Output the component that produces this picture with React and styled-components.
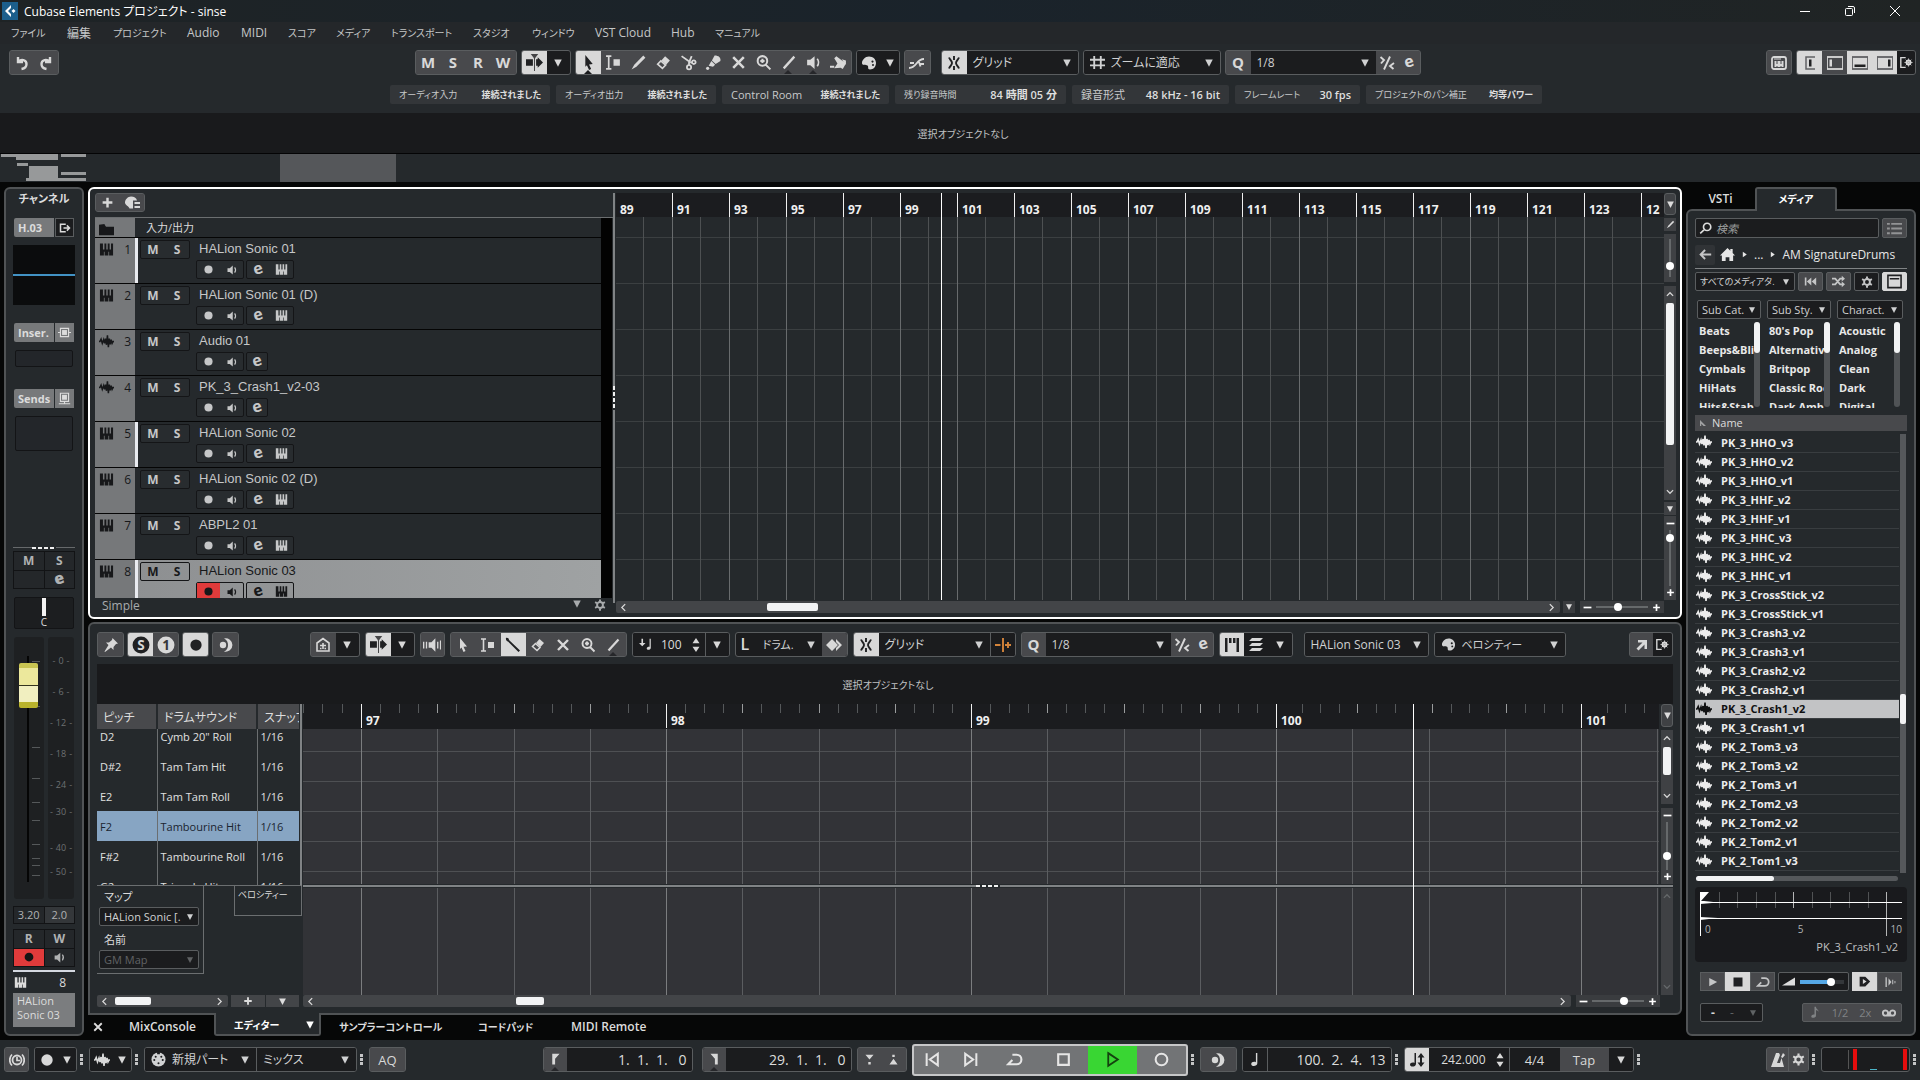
import React from 'react'
import styled, { createGlobalStyle, css } from 'styled-components'

const icons = {
  undo: <path d="M4 2v5h5M4.500 6.500C7 4 12.500 4.500 12.500 9c0 3-2 4.500-5 5" fill="none" stroke="currentColor" strokeWidth="2.400" />,
  redo: <path d="M12 2v5H7M11.500 6.500C9 4 3.500 4.500 3.500 9c0 3 2 4.500 5 5" fill="none" stroke="currentColor" strokeWidth="2.400" />,
  scroll: <><path d="M0 5h6.500v6H0zM9.500 5h1.500V3l5 5-5 5v-2H9.500z" /><path d="M4.500 0h7L8.500 4v12h-1V4z" opacity=".8" /></>,
  arrow: <path d="M5 1l7 8.500-3.500.300L10.500 14l-2 1-2-4.500L5 12z" />,
  range: <><path d="M1 2h5M1 14h5M3.500 2v12" fill="none" stroke="currentColor" strokeWidth="1.600" /><path d="M8 5h6v6H8z" /></>,
  pencil: <path d="M12.500 1.500l2 2L6 12l-4.500 2.500L4 10z" />,
  eraser: <><path d="M9.500 2L14 6 10.500 10 6 6z" /><path d="M5.500 6.500l4.500 4-3 3-4.500-4z" fill="none" stroke="currentColor" strokeWidth="1.500" /></>,
  scissors: <path d="M1.500 2l8.500 6M11 2L8.500 8v2.500M8.500 10.500a2 2 0 100 4 2 2 0 100-4M13 6a1.700 1.700 0 100 3.400A1.700 1.700 0 1013 6M10 8h2" fill="none" stroke="currentColor" strokeWidth="1.700" />,
  glue: <><path d="M9 1.500c4 0 6 2 5.500 5L10 9.500 6.500 6z" /><path d="M6 6.500l3.500 3.500-2 2-4-1z" /><circle cx="2.500" cy="13.500" r="1.500" /></>,
  cross: <path d="M3 3l10 10M13 3L3 13" fill="none" stroke="currentColor" strokeWidth="2.400" />,
  zoom: <path d="M7 2a4.500 4.500 0 100 9 4.500 4.500 0 100-9M7 4.500v4M5 6.500h4M10 10l4.500 4.500" fill="none" stroke="currentColor" strokeWidth="1.900" />,
  line: <path d="M13.500 2.500l-10 11" fill="none" stroke="currentColor" strokeWidth="2.200" />,
  drumstick: <path d="M1 1c1.500-.500 3 .500 3 2L15 13.500 13.500 15 3 4.500C1.500 4.500.500 2.500 1 1z" />,
  speaker: <><path d="M2 5.500h3L9 2v12L5 10.500H2z" /><path d="M11.500 4.500c1.500 2 1.500 5 0 7" fill="none" stroke="currentColor" strokeWidth="1.500" /></>,
  feedback: <path d="M5 5.500h2.500L11 2v12L7.500 10.500H5zM0 5h1.200v6H0zM2.500 5h1.200v6H2.500zM12.500 5h1.200v6h-1.200zM15 4h1v8h-1z" />,
  warp: <path d="M4 4l2-2 9 7-3 5-2-1-6 .500 3-4.500zM0 11h4v2H0zM11 5l4 1v4z" />,
  palette: <path fillRule="evenodd" d="M8 1.500c4 0 7 2.800 7 6.500s-2.500 6.500-6 6.500c-3 0-1-3-2.500-4S1 11 1 8s3-6.500 7-6.500zM11.500 5.500a1.100 1.100 0 100 2.200 1.100 1.100 0 100-2.200M12 9a1 1 0 100 2 1 1 0 100-2" />,
  crossfade: <path d="M0 13c8 0 7-9 15-9M1 8h4M11 9h4M9.500 5.500l2 6" fill="none" stroke="currentColor" strokeWidth="1.900" />,
  snap: <path d="M8 1v4M8 11v4M3 2.500C4 5 6 6 6 8s-2 3-3 5.500M13 2.500C12 5 10 6 10 8s2 3 3 5.500" fill="none" stroke="currentColor" strokeWidth="1.900" />,
  hash: <path d="M0 5h16M0 11h16M4.500 1v14M11.500 1v14" fill="none" stroke="currentColor" strokeWidth="2" />,
  iter: <path d="M11 1.500L5 14.500M1.500 2L5 5 2 8.500M15 8l-4 3 3.500 3" fill="none" stroke="currentColor" strokeWidth="1.900" />,
  piano: <path d="M1 1.500h3.200V8h1.600V1.500h2V8h1.500V1.500h2V8h1.500V1.500H15v13h-4.200v-4h-.800v4H6v-4h-.800v4H1z" />,
  wave: <path d="M0 8h1l1.200-2.500L3.500 10 5 6l1 4 1-5 1 6.500L9 1.500l1 12.500 1-9 1 6 1-5 1 4 1-2h1" fill="none" stroke="currentColor" strokeWidth="1.600" />,
  rec: <circle cx="8" cy="8" r="5" />,
  bigrec: <circle cx="8" cy="8" r="6.500" />,
  folder: <path d="M0 3h6l1.500 2H16v9H0zM0 2h6v1z" />,
  plus: <path d="M8 2v12M2 8h12" fill="none" stroke="currentColor" strokeWidth="3" />,
  preset: <path d="M7 1.500c3 0 5.500 1.500 6 4H9v8H5.500C5 11 1 10.500 1 7.500s3-6 6-6zM10.500 7H16v2h-5.500zM10.500 11H16v2h-5.500z" />,
  pin: <path d="M9.500 1l5.500 5.500-2 .500-2.500 3v3L8 10.500 2 15l-.500-.500L5.500 8 3 5.500h3L9 3z" />,
  half: <><circle cx="5" cy="8" r="3.200" /><path d="M6 1.400a6.800 6.800 0 110 13.200c3-1.300 4-4 4-6.600S9 2.700 6 1.400z" /></>,
  house: <path d="M2 14V6l6-4.500L14 6v8zM5 8.500h6M8 6v6M5 11.500h1.500M9.500 11.500H11" fill="none" stroke="currentColor" strokeWidth="1.600" />,
  solo: <><circle cx="8" cy="8" r="7.500" /><text x="8" y="12.200" textAnchor="middle" fontSize="12" fontWeight="700" fill="#d8d8d8">S</text></>,
  one: <><circle cx="8" cy="8" r="7.500" /><text x="8" y="12.200" textAnchor="middle" fontSize="12" fontWeight="700" fill="#36373a">1</text></>,
  velo: <path d="M3 1h2v5h3l-4 4-4-4h3zM13 1h1.500v11c0 3-5 3.500-5 .700 0-1.700 2-2.200 3.500-2z" />,
  diamond: <path d="M6 2l6 6-6 6-6-6zM10 2l6 6-6 6v-3l3-3-3-3z" />,
  tune: <path d="M8 1v14M0 8h5.500M10 8h6M13 5v6" fill="none" stroke="#d4843a" strokeWidth="1.900" />,
  gates: <path d="M1 1h2.500v14H1zM5 1h2.500v5H5zM9 1h2.500v5H9zM12.500 1H15v14h-2.500z" />,
  layers: <path d="M4 1h11l-3 3H1zM4 6h11l-3 3H1zM4 11h11l-3 3H1z" />,
  openout: <path d="M4 3h9v9h-2.500V7.500L4.500 13.500 2.500 11.500 8.500 5.500H4z" />,
  winset: <><path d="M7 2H1v12h6" fill="none" stroke="currentColor" strokeWidth="1.700" /><circle cx="10.500" cy="8" r="2.700" fill="none" stroke="currentColor" strokeWidth="1.800" /><path d="M10.500 3v10M5.500 8h10M7 4.500l7 7M14 4.500l-7 7" fill="none" stroke="currentColor" strokeWidth="1" /></>,
  keys: <><rect x="1" y="2" width="14" height="12" rx="2" fill="none" stroke="currentColor" strokeWidth="1.800" /><path d="M3.500 6h2v3h1V6h3v3h1V6h2v6h-2v-1h-1v1h-3v-1h-1v1h-2zM3 3.500h7v1H3z" /></>,
  zoneA: <><path d="M13 2H4v12h9" fill="none" stroke="#606164" strokeWidth="1.500" /><path d="M7 4.500h2.500v7H7z" /></>,
  zoneB: <><rect x="0" y="2" width="16" height="12" fill="none" stroke="currentColor" strokeWidth="1.800" /><path d="M2.500 4.500H5v7H2.500z" /></>,
  zoneC: <><rect x="0" y="2" width="16" height="12" fill="none" stroke="#606164" strokeWidth="1.800" /><path d="M2.500 9.500h11V12h-11z" /></>,
  zoneD: <><rect x="0" y="2" width="16" height="12" fill="none" stroke="#606164" strokeWidth="1.800" /><path d="M11 4.500h2.500v7H11z" /></>,
  out: <path d="M9 3H2v10h7M6 8h8M10.500 4.500L14 8l-3.500 3.500" fill="none" stroke="currentColor" strokeWidth="2" />,
  insert: <><path d="M5 5h6v6H5z" /><path d="M3 3h10v10H3zM0 8h3M13 8h3" fill="none" stroke="currentColor" strokeWidth="1.400" /></>,
  send: <><path d="M5 3.500h6v6H5z" /><path d="M3 1.500h10v10H3zM8 12v3M1 14.500h14" fill="none" stroke="currentColor" strokeWidth="1.400" /></>,
  search: <path d="M10 1.500a4.500 4.500 0 100 9 4.500 4.500 0 100-9M6.500 9.500L1.500 14" fill="none" stroke="currentColor" strokeWidth="2" />,
  list: <path d="M0 3h3M0 8h3M0 13h3M4.500 3H16M4.500 8H16M4.500 13H16" fill="none" stroke="currentColor" strokeWidth="2" opacity=".6" />,
  back: <path d="M15 8H2.500M7.500 2.500L2 8l5.500 5.500" fill="none" stroke="currentColor" strokeWidth="2.400" />,
  home: <path d="M8 1l3 3V2h2.500v4.500L16 9h-2v6h-4v-4H6v4H2V9H0z" />,
  right: <path d="M5 3l7 5-7 5z" />,
  prev: <path d="M1 3h2v10H1zM9 3v10L3.500 8zM15 3v10L9.500 8z" />,
  shuffle: <><path d="M0 4.500h4l6 7h2.500M0 11.500h4l6-7h2.500" fill="none" stroke="currentColor" strokeWidth="2.200" /><path d="M12 1l4 3.500L12 8zM12 8l4 3.500-4 3.500z" /></>,
  gear: <><circle cx="8" cy="8" r="3.900" fill="none" stroke="currentColor" strokeWidth="2.600" /><path d="M8 .500v3M8 12.500v3M1.500 4.200l2.600 1.500M11.900 10.300l2.600 1.500M1.500 11.800l2.600-1.500M11.900 5.700l2.600-1.500" stroke="currentColor" strokeWidth="2.600" /></>,
  panel: <path d="M1 1.500h14v13H1zM3 5h10" fill="none" stroke="currentColor" strokeWidth="1.700" />,
  sort: <path d="M2 2l12 12H9L4.500 9.500V14H2z" opacity=".6" />,
  play: <path d="M3 2.500L13.500 8 3 13.500z" />,
  playline: <path d="M4 2l9 6-9 6z" fill="none" stroke="currentColor" strokeWidth="1.700" />,
  stop: <path d="M2 2h12v12H2z" />,
  stopline: <path d="M3 3h10v10H3z" fill="none" stroke="currentColor" strokeWidth="2" />,
  loop: <path d="M6 3.500h4a4 4 0 010 9H2M6 8.500l-4 4h6" fill="none" stroke="currentColor" strokeWidth="2" />,
  circle: <circle cx="8" cy="8" r="5.500" fill="none" stroke="currentColor" strokeWidth="1.900" />,
  start: <path d="M2.500 2v12M13 2.500v11L5.500 8z" fill="none" stroke="currentColor" strokeWidth="1.900" />,
  end: <path d="M13.500 2v12M3 2.500v11L10.500 8z" fill="none" stroke="currentColor" strokeWidth="1.900" />,
  ramp: <path d="M0 13L16 3v10z" />,
  autoplay: <path fillRule="evenodd" d="M2 2h7l6 6-6 6H2zM6 5v6l4.500-3z" />,
  beats: <path d="M2 1.500h1.800v13H2zM6 3l4 5-4 5zM11 5h1.300v6H11zM14 6.500h1.200v3H14z" />,
  note: <path d="M8 1h1.800c0 3 3.200 3 3.200 6-1-1.500-2-1.800-3.200-1.800V12c0 3-5.800 3.500-5.800.800C4 11 6.500 10 8 10.500z" />,
  quarter: <path d="M9.500 1h1.500v11c0 3.500-6.500 4-6.500.800 0-2.300 3-2.800 5-2z" />,
  tape: <path d="M4 5a3 3 0 100 6h8a3 3 0 100-6 3 3 0 00-2.500 4.500h-3A3 3 0 004 5z" fill="none" stroke="currentColor" strokeWidth="2.200" />,
  clock: <><circle cx="8" cy="8" r="4.500" fill="none" stroke="currentColor" strokeWidth="1.800" /><path d="M8 5v3.500h3M3 2.500c-3 3-3 8 0 11M13 2.500c3 3 3 8 0 11" fill="none" stroke="currentColor" strokeWidth="1.700" /></>,
  midi: <><circle cx="8" cy="8" r="7.500" /><g fill="#1d1e20"><circle cx="3.500" cy="8.500" r="1.100" /><circle cx="12.500" cy="8.500" r="1.100" /><circle cx="5" cy="5" r="1.100" /><circle cx="8" cy="12" r="1.100" /><circle cx="11" cy="5" r="1.100" /><path d="M6.500 0h3v2.500h-3z" /></g></>,
  locL: <path d="M4 1h9L7.500 7v7H4z" />,
  locR: <path d="M12 1H3l5.500 6v7H12z" />,
  punchIn: <path d="M3 2h10l-5 6zM6.500 11h3v3h-3z" />,
  punchOut: <path d="M3 14h10L8 7zM6.500 2h3v3h-3z" />,
  tempo: <path d="M5.500 1H7v11c0 3-6 3.500-6 .800C1 11 3.500 10 5.500 11zM12 1l3.500 4.500H13v5h2.500L12 15l-3.500-4.500H11v-5H8.500z" />,
  metro: <path d="M6 1h3l1 2-3 8h3l1.500-5L14 15H1zM13 1l2 2-2.500 3-1.500-1z" />,
  logo: <path d="M9 2L3 8l6 6v-3L6 8l3-3zM11.500 6L13.500 8l-2 2-2-2z" />,
  spin: <path d="M8 0l4 6H4zM8 16l4-6H4z" />,
  tri: <path d="M2 2.500h12L8 14z" />,
  minus: <path d="M1 6.500h14v3H1z" />,
  up: <path d="M3 11l5-5 5 5" fill="none" stroke="currentColor" strokeWidth="2" />,
  down: <path d="M3 5l5 5 5-5" fill="none" stroke="currentColor" strokeWidth="2" />,
  left: <path d="M11 2L5 8l6 6" fill="none" stroke="currentColor" strokeWidth="2.200" />,
  rightline: <path d="M5 2l6 6-6 6" fill="none" stroke="currentColor" strokeWidth="2.200" />,
}

function Icon({ name, size = 16 }) {
  return <Svg width={size} height={size} viewBox="0 0 16 16" fill="currentColor" aria-hidden="true">{icons[name]}</Svg>
}

function IconTool({ icon, size, label, ...rest }) {
  return <Tool aria-label={label || icon} {...rest}><Icon name={icon} size={size} /></Tool>
}

// select with the arrow stacked over its right edge
function Drop({ value, label, width, grow, size = 12, bare, disabled, icon }) {
  return (
    <DropBox $w={width} $grow={grow} $bare={bare} $dim={disabled}>
      {icon && <Icon name={icon} size={15} />}
      <DropStack>
        <DropSelect aria-label={label || value} disabled={disabled} $s={size} defaultValue={value}>
          <option>{value}</option>
        </DropSelect>
        <Icon name="tri" size={bare ? 10 : 8} />
      </DropStack>
    </DropBox>
  )
}

const kana = text => /[ぁ-ヶ]/.test(text)

const menus = [
  ['ファイル', 56], ['編集', 46], ['プロジェクト', 74], ['Audio', 54], ['MIDI', 47], ['スコア', 48], ['メディア', 55],
  ['トランスポート', 82], ['スタジオ', 59], ['ウィンドウ', 63], ['VST Cloud', 76], ['Hub', 44], ['マニュアル', 60],
]

const infos = [
  ['オーディオ入力', '接続されました', 160], ['オーディオ出力', '接続されました', 160], ['Control Room', '接続されました', 167],
  ['残り録音時間', '84 時間 05 分', 171], ['録音形式', '48 kHz - 16 bit', 157], ['フレームレート', '30 fps', 125], ['プロジェクトのパン補正', '均等パワー', 176],
]

const tools = ['arrow', 'range', 'pencil', 'eraser', 'scissors', 'glue', 'cross', 'zoom', 'line', 'speaker', 'warp']
const editorTools = ['arrow', 'range', 'drumstick', 'eraser', 'cross', 'zoom', 'line']

const tracks = [
  { name: 'HALion Sonic 01', midi: true, strip: true },
  { name: 'HALion Sonic 01 (D)', midi: true },
  { name: 'Audio 01' },
  { name: 'PK_3_Crash1_v2-03' },
  { name: 'HALion Sonic 02', midi: true, strip: true },
  { name: 'HALion Sonic 02 (D)', midi: true },
  { name: 'ABPL2 01', midi: true },
  { name: 'HALion Sonic 03', midi: true, strip: true, on: true },
]

const bars = [91, 93, 95, 97, 99, 101, 103, 105, 107, 109, 111, 113, 115, 117, 119, 121, 123, 12]

const drums = [
  ['D2', 'Cymb 20" Roll'], ['D#2', 'Tam Tam Hit'], ['E2', 'Tam Tam Roll'], ['F2', 'Tambourine Hit'], ['F#2', 'Tambourine Roll'], ['G2', 'Triangle Hit'],
]

const filters = [
  ['Sub Cat.', ['Beats', 'Beeps&Bli', 'Cymbals', 'HiHats', 'Hits&Stabs'], 70],
  ['Sub Sty.', ["80's Pop", 'Alternative', 'Britpop', 'Classic Rock', 'Dark Ambient'], 70],
  ['Charact.', ['Acoustic', 'Analog', 'Clean', 'Dark', 'Digital'], 72],
]

const files = [
  'HHO_v3', 'HHO_v2', 'HHO_v1', 'HHF_v2', 'HHF_v1', 'HHC_v3', 'HHC_v2', 'HHC_v1', 'CrossStick_v2', 'CrossStick_v1',
  'Crash3_v2', 'Crash3_v1', 'Crash2_v2', 'Crash2_v1', 'Crash1_v2', 'Crash1_v1',
].map(n => 'PK_3_' + n).concat(['Tom3_v3', 'Tom3_v2', 'Tom3_v1', 'Tom2_v3', 'Tom2_v2', 'Tom2_v1', 'Tom1_v3', 'Tom1_v2'].map(n => 'PK_2_' + n))

// level marks beside the fader, [label, space below]
const levels = [['0', 31], ['6', 31], ['12', 31], ['18', 31], ['24', 27], ['30', 36], ['40', 24], ['50', 16]]

function TopBar() {
  return (
    <header>
      <TitleBar>
        <Logo><Icon name="logo" size={16} /></Logo>
        <Title>Cubase Elements プロジェクト - sinse</Title>
        <WinButton aria-label="最小化"><svg width="12" height="12"><path d="M1 6.500h10" stroke="#fff" /></svg></WinButton>
        <WinButton aria-label="元に戻す"><svg width="12" height="12" fill="none" stroke="#fff"><rect x="1.500" y="3.500" width="7" height="7" rx="1" /><path d="M4 1.500h5q1.500 0 1.500 1.500v5" /></svg></WinButton>
        <WinButton aria-label="閉じる"><svg width="12" height="12"><path d="M1 1l10 10M11 1L1 11" stroke="#fff" /></svg></WinButton>
      </TitleBar>
      <MenuBar>{menus.map(([m, w]) => <MenuItem key={m} $w={w} $kana={kana(m)}>{m}</MenuItem>)}</MenuBar>
      <Toolbar>
        <Group>
          <IconTool icon="undo" $w={24} label="元に戻す操作" />
          <IconTool icon="redo" $w={24} label="再実行" />
        </Group>
        <Tools $shift={10} $gap={4}>
          <Group>{['M', 'S', 'R', 'W'].map(l => <Tool key={l}><Letter>{l}</Letter></Tool>)}</Group>
          <Group>
            <IconTool icon="scroll" $on size={17} />
            <IconTool icon="tri" size={10} label="オートスクロール設定" $dark $w={23} />
          </Group>
          <Group>{tools.map(t => <IconTool key={t} icon={t} size={17} $on={t === 'arrow'} $notch={['arrow', 'line', 'speaker'].includes(t)} />)}</Group>
          <Group $dark>
            <IconTool icon="palette" $dark />
            <IconTool icon="tri" size={10} $w={17} label="色の設定" $dark />
          </Group>
          <Group><IconTool icon="crossfade" /></Group>
          <Space $w={2} />
          <Group $dark>
            <IconTool icon="snap" $on />
            <Drop value="グリッド" width={111} bare />
          </Group>
          <Group $dark><Drop value="ズームに適応" width={136} bare icon="hash" /></Group>
          <Group>
            <Tool aria-label="クオンタイズ"><Letter>Q</Letter></Tool>
            <Drop value="1/8" label="クオンタイズ値" width={125} bare />
            <IconTool icon="iter" $w={22} />
            <Tool aria-label="クオンタイズ編集" $w={22}><LetterE>e</LetterE></Tool>
          </Group>
        </Tools>
        <Tools $gap={4}>
          <Group><IconTool icon="keys" $w={24} /></Group>
          <Group>
            <IconTool icon="zoneA" $on />
            <IconTool icon="zoneB" />
            <IconTool icon="zoneC" $on />
            <IconTool icon="zoneD" $on />
            <IconTool icon="winset" $w={18} size={13} $dark />
          </Group>
        </Tools>
      </Toolbar>
      <InfoRow>
        {infos.map(([k, v, w]) => <Info key={k} $w={w}><InfoText $kana={kana(k)}>{k}</InfoText><InfoText as="b" $kana={kana(v)}>{v}</InfoText></Info>)}
      </InfoRow>
      <Status $edge>選択オブジェクトなし</Status>
      <Overview>
        <svg width="88" height="28" fill="#97999a">
          <path d="M1 0h57v3H1zM16 3h42v3H16zM61 0h25v3H61zM17 9h11v3H17zM29 12h29v12H29zM61 18h25v3H61zM26 24h60v3H26z" />
        </svg>
        <View />
      </Overview>
    </header>
  )
}

function ChannelStrip() {
  return (
    <Strip>
      <StripTitle>チャンネル</StripTitle>
      <StripHead>
        <StripLabel>H.03</StripLabel>
        <StripIcon $dark aria-label="出力"><Icon name="out" size={12} /></StripIcon>
      </StripHead>
      <Eq><i /></Eq>
      <StripHead $top={18}><StripLabel>Inser.</StripLabel><StripIcon aria-label="インサート"><Icon name="insert" size={13} /></StripIcon></StripHead>
      <Slot $h={17} />
      <StripHead $top={22}><StripLabel>Sends</StripLabel><StripIcon aria-label="センド"><Icon name="send" size={13} /></StripIcon></StripHead>
      <Slot $h={35} />
      <Fill />
      <Handle><i /></Handle>
      <Quad>
        <QuadButton>M</QuadButton><QuadButton>S</QuadButton>
        <QuadButton aria-label="空き" /><QuadButton aria-label="編集"><LetterE>e</LetterE></QuadButton>
      </Quad>
      <Pan><i /><span>C</span></Pan>
      <FaderRow>
        <FaderBox>
          <Fader type="range" min="0" max="100" defaultValue="96" aria-label="音量" />
          <svg width="8" height="262" stroke="#55585a"><path d="M0 24.500h8M0 69.500h8M0 110.500h8M0 141.500h8M0 165.500h8M0 183.500h8M0 207.500h8M0 221.500h8M0 228.500h8M0 238.500h8" /></svg>
        </FaderBox>
        <Scale>{levels.map(([l, h]) => <Level key={l} $h={h}><span>{l}</span></Level>)}</Scale>
      </FaderRow>
      <Values><span>3.20</span><span>2.0</span></Values>
      <Quad $top={5}>
        <QuadButton>R</QuadButton><QuadButton>W</QuadButton>
        <QuadButton $rec aria-label="録音可能"><Icon name="rec" size={14} /></QuadButton>
        <QuadButton aria-label="モニター"><Icon name="speaker" size={13} /></QuadButton>
      </Quad>
      <StripLine />
      <StripNumber><Icon name="piano" size={13} /><span>8</span></StripNumber>
      <StripName>HALion<br />Sonic 03</StripName>
    </Strip>
  )
}

function TrackZone() {
  return (
    <TrackPanel>
      <TrackList>
        <TrackTop>
          <Group $h={19}>
            <IconTool icon="plus" size={13} $w={23} label="トラックを追加" />
            <IconTool icon="preset" size={16} label="プリセット" />
          </Group>
        </TrackTop>
        <TrackBody>
          <TrackRows>
            <FolderRow><Gutter><Icon name="folder" size={15} /></Gutter><span>入力/出力</span></FolderRow>
            {tracks.map((t, i) => (
              <Track key={t.name} $on={t.on}>
                <Gutter $strip={t.strip}><Icon name={t.midi ? 'piano' : 'wave'} size={15} /><span>{i + 1}</span></Gutter>
                <MiniGroup $top={2}><Mini><Letter $s={12}>M</Letter></Mini><Mini><Letter $s={12}>S</Letter></Mini></MiniGroup>
                <TrackInfo>
                  <TrackName>{t.name}</TrackName>
                  <MiniGroup>
                    <Mini aria-label="録音可能" $w={23} $rec={t.on}><Icon name="rec" size={13} /></Mini>
                    <Mini aria-label="モニター" $w={23}><Icon name="speaker" size={12} /></Mini>
                  </MiniGroup>
                  <MiniGroup>
                    <Mini aria-label="チャンネル設定の編集" $w={t.midi ? 22 : 20}><LetterE>e</LetterE></Mini>
                    {t.midi && <Mini aria-label="インストゥルメントの編集" $w={24}><Icon name="piano" size={13} /></Mini>}
                  </MiniGroup>
                </TrackInfo>
              </Track>
            ))}
          </TrackRows>
          <MeterLane />
        </TrackBody>
        <TrackFoot><span>Simple</span><Icon name="tri" size={10} /><Icon name="gear" size={12} /></TrackFoot>
      </TrackList>
      <Divider><i /></Divider>
      <Arrange>
        <Ruler>
          <RulerBar $first>89</RulerBar>
          {bars.map(b => <RulerBar key={b}>{b}</RulerBar>)}
        </Ruler>
        <ArrangeGrid />
        <BottomRow>
          <HScroll>
            <Icon name="left" size={9} /><Thumb $left={139} $w={51} /><Fill /><Icon name="rightline" size={9} />
          </HScroll>
          <SquareButton aria-label="ズームメニュー"><Icon name="tri" size={8} /></SquareButton>
          <ZoomBox><Icon name="minus" size={9} /><HRange type="range" defaultValue="42" aria-label="横ズーム" /><Icon name="plus" size={9} /></ZoomBox>
        </BottomRow>
        <Playhead $left="31%" $bottom={17} />
      </Arrange>
      <VColumn>
        <VButton $h={22} $line aria-label="ルーラー設定"><Icon name="tri" size={9} /></VButton>
        <VButton $h={13} $top={3} aria-label="編集"><Icon name="pencil" size={9} /></VButton>
        <VSlider $h={48} $top={3}><VRange type="range" defaultValue="24" aria-label="波形ズーム" /></VSlider>
        <VScroll $top={4}><Icon name="up" size={10} /><VThumb $top={4} $h={142} /><Fill /><Icon name="down" size={10} /></VScroll>
        <VButton $h={13} $top={2} aria-label="縦ズームメニュー"><Icon name="tri" size={8} /></VButton>
        <VSlider $h={84} $top={1}><Icon name="minus" size={9} /><VRange type="range" defaultValue="92" aria-label="縦ズーム" /><Icon name="plus" size={9} /></VSlider>
      </VColumn>
    </TrackPanel>
  )
}

function EditorToolbar() {
  return (
    <EditorBar>
      <Tools>
        <Group><IconTool icon="pin" /></Group>
        <Group><IconTool icon="solo" $on size={18} /><IconTool icon="one" size={18} /></Group>
        <Group><IconTool icon="rec" $on size={18} label="録音" /></Group>
        <Group><IconTool icon="half" /></Group>
      </Tools>
      <Tools $shift={7} $gap={5}>
        <Group><IconTool icon="house" /><IconTool icon="tri" size={10} $w={23} label="表示設定" $dark /></Group>
        <Group><IconTool icon="scroll" $on size={17} /><IconTool icon="tri" size={10} $w={23} label="スクロール設定" $dark /></Group>
        <Group><IconTool icon="feedback" $w={23} size={18} /></Group>
        <Group>{editorTools.map(t => <IconTool key={t} icon={t} $on={t === 'drumstick'} $notch={t === 'line'} />)}</Group>
        <Group $dark>
          <IconTool icon="velo" $dark size={13} />
          <NumberField aria-label="ベロシティー値" defaultValue="100" $w={29} />
          <IconTool icon="spin" $dark $w={18} size={14} />
          <IconTool icon="tri" size={10} $dark $line $w={24} label="ベロシティー設定" />
        </Group>
        <Group $dark>
          <Mark>L</Mark>
          <Drop value="ドラム." label="リニア" width={65} bare size={11} />
          <IconTool icon="diamond" />
        </Group>
        <Group $dark>
          <IconTool icon="snap" $on />
          <Drop value="グリッド" label="スナップタイプ" width={111} bare />
          <IconTool icon="tune" $line $dark />
        </Group>
        <Group>
          <Tool aria-label="クオンタイズ適用" $w={24}><Letter>Q</Letter></Tool>
          <Drop value="1/8" label="長さ" width={125} bare />
          <IconTool icon="iter" $w={22} />
          <Tool aria-label="クオンタイズ設定" $w={20}><LetterE>e</LetterE></Tool>
        </Group>
        <Group $dark><IconTool icon="gates" $on $w={24} /><IconTool icon="layers" $dark $w={25} /><IconTool icon="tri" size={10} $dark $w={23} label="レイヤー" /></Group>
        <Space $w={1} />
        <Group $dark><Drop value="HALion Sonic 03" width={123} bare /></Group>
        <Group $dark><Drop value="ベロシティー" width={130} bare size={11} icon="palette" /></Group>
      </Tools>
      <Group><IconTool icon="openout" $w={23} /><IconTool icon="winset" size={13} $w={19} $dark /></Group>
    </EditorBar>
  )
}

function DrumBars({ ruler }) {
  const n = ruler ? 16 : 4
  return (
    <BarRow>
      <Lead>{ruler && [0, 1, 2].map(i => <Tick key={i} />)}</Lead>
      {[97, 98, 99, 100, 101].map(b => (
        <DrumBar key={b} $n={n}>
          {Array.from({ length: n }, (_, i) => ruler
            ? <Tick key={i} $beat={i % 4 === 0} $bar={i === 0}>{i === 0 && <span>{b}</span>}</Tick>
            : <Beat key={i} $bar={i === 0} />)}
        </DrumBar>
      ))}
    </BarRow>
  )
}

function Editor() {
  return (
    <EditorPanel>
      <EditorToolbar />
      <Status>選択オブジェクトなし</Status>
      <EditorBody>
        <DrumSide>
          <DrumTableBox>
            <DrumTable>
              <thead><tr><th>ピッチ</th><th>ドラムサウンド</th><th>スナップ</th></tr></thead>
              <tbody>
                {drums.map(([p, n], i) => <DrumRow key={p} $first={i === 0} $on={p === 'F2'}><td>{p}</td><td>{n}</td><td>1/16</td></DrumRow>)}
              </tbody>
            </DrumTable>
          </DrumTableBox>
          <MapArea>
            <MapBox>
              <p>マップ</p>
              <Drop value="HALion Sonic [." label="マップ" width={100} size={11} />
              <p>名前</p>
              <Drop value="GM Map" label="名前" width={100} size={11} disabled />
            </MapBox>
            <LaneName>ベロシティー</LaneName>
          </MapArea>
          <SideFoot>
            <HScroll><Icon name="left" size={9} /><Thumb $left={6} $w={36} /><Fill /><Icon name="rightline" size={9} /></HScroll>
            <FootButtons>
              <button aria-label="レーンを追加"><Icon name="plus" size={10} /></button>
              <button aria-label="レーン設定"><Icon name="tri" size={9} /></button>
            </FootButtons>
          </SideFoot>
        </DrumSide>
        <DrumMain>
          <DrumUpper>
            <DrumCanvas>
              <DrumRuler><DrumBars ruler /></DrumRuler>
              <DrumGrid><DrumBars /></DrumGrid>
            </DrumCanvas>
            <VColumn $editor>
              <VButton $h={23} $line aria-label="エディタールーラー設定"><Icon name="tri" size={9} /></VButton>
              <VScroll $top={3}><Icon name="up" size={10} /><VThumb $top={4} $h={28} /><Fill /><Icon name="down" size={10} /></VScroll>
              <VSlider $h={76} $top={4}><Icon name="minus" size={9} /><VRange type="range" defaultValue="25" aria-label="鍵盤ズーム" /><Icon name="plus" size={9} /></VSlider>
            </VColumn>
          </DrumUpper>
          <SplitBar><i /></SplitBar>
          <DrumLower>
            <DrumCanvas><DrumGrid $plain><DrumBars /></DrumGrid></DrumCanvas>
            <VColumn $editor><VScroll $dim><Icon name="up" size={10} /><Fill /><Icon name="down" size={10} /></VScroll></VColumn>
          </DrumLower>
          <BottomRow $editor>
            <HScroll><Icon name="left" size={9} /><Thumb $left={201} $w={28} /><Fill /><Icon name="rightline" size={9} /></HScroll>
            <ZoomBox><Icon name="minus" size={9} /><HRange type="range" defaultValue="64" aria-label="エディターの横ズーム" /><Icon name="plus" size={9} /></ZoomBox>
          </BottomRow>
          <Playhead $left="81%" $bottom={12} />
        </DrumMain>
      </EditorBody>
    </EditorPanel>
  )
}

function MediaRack() {
  return (
    <Rack>
      <RackTabs><RackTab>VSTi</RackTab><RackTab $on>メディア</RackTab></RackTabs>
      <RackBody>
        <RackRow $h={20}>
          <SearchBox><Icon name="search" size={13} /><input placeholder="検索" aria-label="検索" /></SearchBox>
          <MediaButton aria-label="結果の表示"><Icon name="list" size={15} /></MediaButton>
        </RackRow>
        <Crumbs>
          <MediaButton $plain aria-label="戻る"><Icon name="back" size={13} /></MediaButton>
          <a href="#home" aria-label="ホーム"><Icon name="home" size={15} /></a>
          <Icon name="right" size={9} /><a href="#up">...</a><Icon name="right" size={9} />
          <a href="#drums">AM SignatureDrums</a>
        </Crumbs>
        <RackRow $h={19} $top={3}>
          <Drop value="すべてのメディアタ." label="メディアタイプ" grow size={9} />
          <MediaButton aria-label="先頭へ"><Icon name="prev" size={13} /></MediaButton>
          <MediaButton aria-label="シャッフル"><Icon name="shuffle" size={13} /></MediaButton>
          <MediaButton $dark aria-label="設定"><Icon name="gear" size={12} /></MediaButton>
          <MediaButton $on aria-label="フィルター"><Icon name="panel" size={15} /></MediaButton>
        </RackRow>
        <Filters>
          {filters.map(([head, items, w]) => (
            <Filter key={head} $w={w}>
              <Drop value={head} width={w - 6} size={11} />
              <FilterBody>
                <ul>{items.map(x => <li key={x}>{x}</li>)}</ul>
                <Bar><i /></Bar>
              </FilterBody>
            </Filter>
          ))}
        </Filters>
        <FileArea>
          <FileBox>
            <FileTable>
              <thead><tr><th><Icon name="sort" size={8} /></th><th>Name</th></tr></thead>
              <tbody>
                {files.map(f => <FileRow key={f} $on={f === 'PK_3_Crash1_v2'}><td><Icon name="wave" size={16} /></td><td>{f}</td></FileRow>)}
              </tbody>
            </FileTable>
          </FileBox>
          <FileScroll><i /></FileScroll>
        </FileArea>
        <FileHScroll><i /></FileHScroll>
        <WaveBox>
          <svg width="100%" height="44" viewBox="0 0 202 44" preserveAspectRatio="none" fill="none">
            <path d="M19.500 0v16M37.500 0v16M56.500 0v16M75.500 0v16M112.500 0v16M130.500 0v16M149.500 0v16M168.500 0v16" stroke="#505254" />
            <path d="M93.500 0v16M186.500 0v44" stroke="#b4b5b6" />
            <path d="M0 10.500h202M0 26.500h202M.500 0v44" stroke="#fff" />
            <path d="M0 0h9L1 9h3l14 1.500-18 1.500zM0 25l18 1-18 2z" fill="#fff" />
          </svg>
          <WaveScale><span>0</span><span>5</span><span>10</span></WaveScale>
          <p>PK_3_Crash1_v2</p>
        </WaveBox>
        <PlayRow>
          <MediaGroup>
            <MediaButton aria-label="プレビュー再生"><Icon name="play" size={12} /></MediaButton>
            <MediaButton $on aria-label="プレビュー停止"><Icon name="stop" size={12} /></MediaButton>
            <MediaButton aria-label="プレビューのループ"><Icon name="loop" size={14} /></MediaButton>
          </MediaGroup>
          <VolumeBox><Icon name="ramp" size={13} /><Volume type="range" defaultValue="76" aria-label="プレビュー音量" /></VolumeBox>
          <MediaGroup>
            <MediaButton $on aria-label="自動再生"><Icon name="autoplay" size={13} /></MediaButton>
            <MediaButton aria-label="テンポに合わせる"><Icon name="beats" size={12} /></MediaButton>
          </MediaGroup>
        </PlayRow>
        <PlayRow $top={12}>
          <Pitch><b>-</b><span>-</span><Icon name="tri" size={8} /></Pitch>
          <Rates><Icon name="note" size={13} /><span>1/2</span><span>2x</span><Icon name="tape" size={14} /></Rates>
        </PlayRow>
      </RackBody>
    </Rack>
  )
}

function Transport() {
  return (
    <TransportBar>
      <Tools $gap={0}>
        <Group><IconTool icon="clock" $w={23} /></Group>
        <Space $w={5} />
        <Group $dark><IconTool icon="bigrec" size={14} $dark $w={23} label="録音モード" /><IconTool icon="tri" size={10} $dark $w={18} label="録音モード設定" /></Group>
        <Dots />
        <Group $dark><IconTool icon="wave" $dark $w={23} /><IconTool icon="tri" size={10} $dark $w={18} label="オーディオ録音モード" /></Group>
        <Dots />
        <Group $dark>
          <Drop value="新規パート" label="MIDI 録音モード" width={111} bare icon="midi" />
          <Drop value="ミックス" width={100} bare />
        </Group>
        <Dots />
        <Group><Tool $w={35}><Plain>AQ</Plain></Tool></Group>
      </Tools>
      <Tools $gap={0} $shift={14}>
        <Group $dark><IconTool icon="locL" $w={23} size={13} $notch /><NumberField aria-label="左ロケーター" defaultValue="1.  1.  1.   0" $w={125} $big /></Group>
        <Space $w={9} />
        <Group $dark><IconTool icon="locR" $w={23} size={13} $notch /><NumberField aria-label="右ロケーター" defaultValue="29.  1.  1.   0" $w={125} $big /></Group>
        <Space $w={5} />
        <Group><IconTool icon="punchIn" $w={24} size={13} /><IconTool icon="punchOut" $w={24} size={13} /></Group>
        <Space $w={5} />
        <TransportBox>
          {['start', 'end', 'loop', 'stopline', 'playline', 'circle'].map(t => (
            <TransportButton key={t} aria-label={'トランスポート ' + t} $go={t === 'playline'}><Icon name={t} size={17} /></TransportButton>
          ))}
        </TransportBox>
        <Dots />
        <Group><IconTool icon="half" $w={35} /></Group>
        <Space $w={5} />
        <Group $dark><IconTool icon="quarter" $dark $w={24} size={15} /><NumberField aria-label="現在位置" defaultValue="100.  2.  4.  13" $w={124} $big $line /></Group>
        <Dots />
        <Group $dark>
          <IconTool icon="tempo" $on $w={24} />
          <NumberField aria-label="テンポ" defaultValue="242.000" $w={62} />
          <IconTool icon="spin" $dark $w={18} size={14} />
          <Tool $dark $line $w={51}><Plain>4/4</Plain></Tool>
          <Tool $w={49}><Plain>Tap</Plain></Tool>
          <IconTool icon="tri" size={10} $dark $w={24} label="テンポ設定" />
        </Group>
        <Dots />
      </Tools>
      <Tools $gap={0}>
        <Group><IconTool icon="metro" $w={21} /><IconTool icon="gear" $w={20} size={13} $line /></Group>
        <Dots />
        <LevelMeter>
          <svg width="85" height="23"><path d="M25.500 2v19" stroke="#555" /><path d="M30 1h4v21h-4zM80 1h4v21h-4z" fill="#e60d0d" /><path d="M47 21h7v1h-7z" fill="#4cb6c8" /></svg>
        </LevelMeter>
        <Dots />
      </Tools>
    </TransportBar>
  )
}

export default function App() {
  return (
    <Page>
      <Global />
      <TopBar />
      <Body>
        <ChannelStrip />
        <Center>
          <TrackZone />
          <Editor />
          <ZoneTabs>
            <ZoneTab $w={41} $pad={4} aria-label="閉じる"><Icon name="cross" size={12} /></ZoneTab>
            <ZoneTab $w={85}>MixConsole</ZoneTab>
            <ZoneTab $w={107} $pad={18} $on $kana><span>エディター</span><Icon name="tri" size={10} /></ZoneTab>
            <ZoneTab $w={140} $pad={18} $kana>サンプラーコントロール</ZoneTab>
            <ZoneTab $w={92} $pad={17} $kana>コードパッド</ZoneTab>
            <ZoneTab $w={120} $pad={18}>MIDI Remote</ZoneTab>
          </ZoneTabs>
        </Center>
        <MediaRack />
      </Body>
      <Transport />
    </Page>
  )
}

const line = '#5a5d5f'
const panel = '#25292c'
const dark = '#1b1c1e'
const grey = '#48494c'
const lit = '#d8d8d8'

const Global = createGlobalStyle`
  *{ box-sizing:border-box; }
  body{
    margin:0;
    background:#060707;
    color:#dcdcdc;
    font-family:"Open Sans","Noto Sans CJK JP",sans-serif;
    font-feature-settings:"palt";
    font-size:12px;
    overflow:hidden;
  }
  button,input,select{ font:inherit; font-feature-settings:inherit; color:inherit; margin:0; padding:0; border:0; border-radius:0; background:none; outline:0; }
  p,ul{ margin:0; padding:0; list-style:none; }
  a{ color:inherit; text-decoration:none; }
`
const Page = styled.div`
  display:flex;
  flex-direction:column;
  height:100vh;
  background:#060707;
`
const Svg = styled.svg`
  display:block;
  flex:none;
`
const Fill = styled.div`
  flex:1;
`
const Space = styled.div`
  flex:none;
  width:${p => p.$w}px;
`

/* header */
const TitleBar = styled.div`
  display:flex;
  align-items:center;
  height:22px;
  padding-left:2px;
  background:linear-gradient(90deg,#1e2325,#1a232b 50%,#202424);
`
const Logo = styled.div`
  width:16px;
  height:18px;
  padding-top:1px;
  background:#1c5f8c;
  color:#fff;
`
const Title = styled.div`
  flex:1;
  padding-left:6px;
  color:#fff;
`
const WinButton = styled.button`
  width:46px;
  height:22px;
  margin-right:-1px;
  svg{ display:block; margin:auto; }
  &:last-child{ margin-right:2px; }
`
const MenuBar = styled.nav`
  display:flex;
  height:22px;
  padding-left:11px;
  background:#24272a;
`
const MenuItem = styled.button`
  width:${p => p.$w}px;
  padding-bottom:1px;
  text-align:left;
  white-space:nowrap;
  font-size:${p => p.$kana ? 10 : 12}px;
  color:#c4c6c7;
`
const Toolbar = styled.div`
  display:flex;
  justify-content:space-between;
  padding:6px 4px 10px 9px;
  background:${panel};
`
const Tools = styled.div`
  display:flex;
  align-items:center;
  gap:${p => p.$gap ?? 3}px;
  margin-left:${p => p.$shift || 0}px;
`
const Group = styled.div`
  display:flex;
  flex:none;
  height:${p => p.$h || 25}px;
  border:1px solid ${line};
  border-radius:3px;
  background:${p => p.$dark ? dark : grey};
  overflow:hidden;
`
const Tool = styled.button`
  position:relative;
  display:flex;
  align-items:center;
  justify-content:center;
  width:${p => p.$w || 25}px;
  flex:0 1 auto;
  background:${p => p.$on ? lit : p.$dark ? dark : grey};
  color:${p => p.$on ? '#202123' : lit};
  border-left:${p => p.$line ? `1px solid ${line}` : 0};
  ${p => p.$notch && css`
    &::after{
      content:'';
      position:absolute;
      bottom:0;
      width:8px;
      height:4px;
      background:${p.$on ? dark : '#26272a'};
      clip-path:polygon(50% 0,100% 100%,0 100%);
    }
  `}
`
const Letter = styled.b`
  font-size:${p => p.$s || 15}px;
  line-height:1;
`
const LetterE = styled.b`
  font-size:16px;
  line-height:16px;
  margin-top:-3px;
  transform:rotate(-18deg);
`
const Plain = styled.span`
  font-size:13px;
`
const DropBox = styled.div`
  display:flex;
  align-items:center;
  gap:6px;
  flex:${p => p.$grow ? '1' : 'none'};
  width:${p => p.$grow ? 'auto' : p.$w + 'px'};
  min-width:0;
  height:${p => p.$bare ? 'auto' : '19px'};
  padding:0 ${p => p.$bare ? 6 : 4}px;
  background:${dark};
  border:${p => p.$bare ? 0 : `1px solid ${line}`};
  border-radius:${p => p.$bare ? 0 : 2}px;
  color:${p => p.$dim ? '#606264' : '#d0d1d2'};
  & + &{ border-left:1px solid ${line}; }
`
const DropStack = styled.div`
  display:grid;
  flex:1;
  min-width:0;
  align-items:center;
  > *{ grid-area:1 / 1; }
  svg{ justify-self:end; pointer-events:none; }
`
const DropSelect = styled.select`
  appearance:none;
  width:100%;
  min-width:0;
  padding-right:8px;
  font-size:${p => p.$s}px;
  line-height:17px;
  opacity:1;
  option{ background:${dark}; }
`
const InfoRow = styled.div`
  display:flex;
  justify-content:center;
  gap:6px;
  padding:0 0 9px 12px;
  background:${panel};
`
const Info = styled.div`
  display:flex;
  align-items:center;
  justify-content:space-between;
  width:${p => p.$w}px;
  height:19px;
  padding:0 9px;
  background:#333639;
  border-radius:2px;
  white-space:nowrap;
  line-height:16px;
  color:#c8cacb;
  b{ font-weight:600; color:#dedede; }
`
const InfoText = styled.span`
  font-size:${p => p.$kana ? 9 : 11}px;
`
const Status = styled.div`
  display:flex;
  flex:none;
  align-items:center;
  justify-content:center;
  height:${p => p.$edge ? 41 : 40}px;
  padding-left:6px;
  background:#191a1c;
  border-bottom:${p => p.$edge ? '1px solid #040405' : 0};
  font-size:10px;
  color:#c0c2c3;
`
const Overview = styled.div`
  display:flex;
  height:28px;
  background:${panel};
`
const View = styled.div`
  width:116px;
  margin-left:192px;
  background:#55575a;
`

/* main area */
const Body = styled.main`
  display:flex;
  flex:1;
  gap:4px;
  min-height:0;
  padding:5px 4px 4px;
`
const Center = styled.div`
  display:flex;
  flex-direction:column;
  flex:1;
  min-width:0;
`

/* channel strip */
const Strip = styled.aside`
  display:flex;
  flex-direction:column;
  flex:none;
  width:80px;
  padding:0 7px 7px;
  border:2px solid #505355;
  border-radius:6px;
  background:${panel};
`
const StripTitle = styled.b`
  height:29px;
  font-size:11px;
  line-height:20px;
  text-align:center;
`
const StripHead = styled.div`
  display:flex;
  gap:1px;
  height:19px;
  flex:none;
  margin:${p => p.$top || 0}px 1px 0;
`
const StripLabel = styled.b`
  flex:1;
  padding-left:4px;
  font-size:11px;
  line-height:19px;
  background:#77797b;
  border-radius:2px 0 0 2px;
`
const StripIcon = styled.button`
  display:grid;
  place-items:center;
  width:19px;
  background:${p => p.$dark ? dark : '#77797b'};
  border:1px solid ${p => p.$dark ? line : '#77797b'};
`
const Eq = styled.div`
  flex:none;
  height:60px;
  margin-top:8px;
  padding-top:29px;
  background:#0b0c0d;
  i{ display:block; height:2px; background:#4292c4; }
`
const Slot = styled.div`
  flex:none;
  height:${p => p.$h}px;
  margin:8px 2px 0;
  border:1px solid #131416;
  border-radius:2px;
  background:#23262a;
`
const Handle = styled.div`
  display:flex;
  justify-content:center;
  height:1px;
  background:#66696b;
  i{ width:24px; height:2px; background:repeating-linear-gradient(90deg,#f0f0f0 0 4px,${panel} 4px 6px); }
`
const Quad = styled.div`
  display:grid;
  flex:none;
  grid-template-columns:1fr 1fr;
  grid-template-rows:1fr 1fr;
  gap:1px;
  height:38px;
  margin-top:${p => p.$top || 3}px;
  padding:1px;
  background:#121315;
`
const QuadButton = styled.button`
  display:grid;
  place-items:center;
  min-height:0;
  background:${p => p.$rec ? '#e03b3b' : '#24272a'};
  color:${p => p.$rec ? '#141414' : '#b0b2b3'};
  font-size:12px;
  font-weight:700;
  line-height:1;
`
const Pan = styled.div`
  display:flex;
  flex:none;
  flex-direction:column;
  align-items:center;
  height:32px;
  margin:8px 1px 0;
  background:#1c1e20;
  border:1px solid #131416;
  border-radius:2px;
  font-size:10px;
  line-height:12px;
  i{ width:4px; height:18px; background:#f2f2f2; }
`
const FaderRow = styled.div`
  display:flex;
  flex:none;
  gap:4px;
  height:262px;
  margin:8px 1px 0;
`
const FaderBox = styled.div`
  display:flex;
  flex:1;
  padding-left:4px;
  background:#1e2022;
  border-radius:3px;
`
const Fader = styled.input`
  appearance:none;
  writing-mode:vertical-lr;
  direction:rtl;
  width:20px;
  height:226px;
  margin:19px -6px 0 0;
  background:linear-gradient(#050505,#050505) center / 2px 100% no-repeat;
  z-index:1;
  &::-webkit-slider-thumb{
    appearance:none;
    width:19px;
    height:45px;
    border-radius:2px;
    background:linear-gradient(#c9c552 0 5px,#ece89c 5px 22px,#34341e 22px 23px,#f1efc0 23px 39px,#b9b32c 39px);
  }
`
const Scale = styled.div`
  flex:1;
  padding-top:17px;
  background:#1e2022;
  border-radius:3px;
  font-size:9px;
  color:#6d7072;
`
const Level = styled.div`
  display:flex;
  align-items:flex-start;
  justify-content:center;
  height:${p => p.$h}px;
  line-height:14px;
  &::before{ content:'-'; margin-right:3px; }
  &::after{ content:'-'; margin-left:3px; }
`
const Values = styled.div`
  display:flex;
  gap:1px;
  flex:none;
  height:18px;
  margin-top:7px;
  border:1px solid #121315;
  background:#121315;
  span{ flex:1; text-align:center; font-size:11px; line-height:16px; background:#24272a; color:#b0b2b3; }
  span + span{ background:#34373a; }
`
const StripLine = styled.div`
  flex:none;
  height:2px;
  margin-top:3px;
  background:#d4d8e0;
`
const StripNumber = styled.div`
  display:flex;
  flex:none;
  justify-content:space-between;
  align-items:center;
  height:16px;
  margin-top:2px;
  padding:0 9px 0 1px;
`
const StripName = styled.div`
  flex:none;
  height:34px;
  margin-top:3px;
  padding:1px 4px;
  background:#7b7d7f;
  font-size:11px;
  line-height:14px;
`

/* project window */
const TrackPanel = styled.section`
  display:flex;
  flex:1 1 432px;
  min-height:0;
  padding:4px 4px 0 5px;
  border:2px solid #fff;
  border-radius:6px;
  background:${panel};
`
const TrackList = styled.div`
  display:flex;
  flex:none;
  flex-direction:column;
  width:518px;
`
const TrackTop = styled.div`
  display:flex;
  flex:none;
  height:25px;
  padding-right:1px;
  border-bottom:1px solid #6b6e70;
`
const TrackBody = styled.div`
  display:flex;
  flex:1;
  min-height:0;
`
const TrackRows = styled.div`
  flex:1;
  overflow:hidden;
`
const MeterLane = styled.div`
  width:11px;
  margin-right:1px;
  background:#020202;
`
const FolderRow = styled.div`
  display:flex;
  height:19px;
  font-size:11px;
  line-height:19px;
  > span{ margin-left:8px; }
`
const Gutter = styled.div`
  display:flex;
  justify-content:space-between;
  width:43px;
  padding:4px 4px 0 4px;
  background:#76787a;
  border-right:3px solid ${p => p.$strip ? '#e9ebf0' : panel};
  color:#17181a;
  span{ font-size:12px; line-height:16px; }
`
const Track = styled.div`
  display:flex;
  height:46px;
  border-top:1px solid #050505;
  background:${p => p.$on ? 'linear-gradient(90deg,#8d8f91,#9fa2a3)' : panel};
  color:${p => p.$on ? '#17181a' : '#c6c7c8'};
`
const MiniGroup = styled.div`
  display:flex;
  flex:none;
  height:19px;
  margin-top:${p => p.$top || 0}px;
  margin-left:2px;
  border:1px solid #141517;
  border-radius:2px;
`
const Mini = styled.button`
  display:grid;
  place-items:center;
  width:${p => p.$w || 24}px;
  background:${p => p.$rec ? '#e03b3b' : 'rgba(128,128,128,0.04)'};
`
const TrackInfo = styled.div`
  display:flex;
  flex-wrap:wrap;
  align-content:flex-start;
  flex:1;
  padding-left:4px;
`
const TrackName = styled.div`
  flex:0 0 100%;
  height:22px;
  padding-left:5px;
  font:13px/22px "Liberation Sans",sans-serif;
`
const TrackFoot = styled.div`
  display:flex;
  flex:none;
  gap:12px;
  height:19px;
  padding:1px 7px 0;
  font-size:12px;
  line-height:14px;
  color:#a8abad;
  span{ flex:1; }
`
const Divider = styled.div`
  display:flex;
  align-items:center;
  width:2px;
  margin:0 1px 14px 0;
  background:#808385;
  i{ width:2px; height:24px; background:repeating-linear-gradient(#f0f0f0 0 4px,${panel} 4px 6px); }
`
const Arrange = styled.div`
  position:relative;
  display:flex;
  flex-direction:column;
  flex:1;
  min-width:0;
  padding-bottom:4px;
`
const Ruler = styled.div`
  display:flex;
  flex:none;
  height:24px;
  overflow:hidden;
  background:#1b1c1f;
`
const RulerBar = styled.b`
  flex:none;
  width:${p => p.$first ? 56 : 57}px;
  padding-left:4px;
  border-left:${p => p.$first ? 0 : '1px solid #f0f0f0'};
  line-height:34px;
  color:#f0f0f0;
`
const ArrangeGrid = styled.div`
  flex:1;
  margin-bottom:1px;
  background-image:
    linear-gradient(90deg,#686b6d 1px,transparent 1px),
    linear-gradient(90deg,#4d5052 1px,transparent 1px),
    linear-gradient(#3b3f41 1px,transparent 1px);
  background-size:57px 100%,57px 100%,100% 46px;
  background-position:56px 0,27px 0,0 20px;
`
const Playhead = styled.div`
  position:absolute;
  top:0;
  bottom:${p => p.$bottom}px;
  left:${p => p.$left};
  width:1px;
  background:#fff;
`
const BottomRow = styled.div`
  display:flex;
  flex:none;
  gap:5px;
  height:12px;
  padding-right:${p => p.$editor ? 13 : 0}px;
`
const HScroll = styled.div`
  display:flex;
  align-items:center;
  flex:1;
  height:12px;
  padding:0 4px 0 3px;
  background:#434548;
  border-radius:2px;
`
const Thumb = styled.div`
  flex:none;
  width:${p => p.$w}px;
  height:8px;
  margin-left:${p => p.$left}px;
  border-radius:2px;
  background:#f2f3f4;
`
const SquareButton = styled.button`
  display:grid;
  place-items:center;
  width:12px;
  margin-left:-2px;
  background:#3a3c3f;
`
const ZoomBox = styled.div`
  display:flex;
  align-items:center;
  gap:4px;
  width:84px;
  padding:0 3px;
  background:#3a3c3f;
  color:#fff;
`
const HRange = styled.input`
  appearance:none;
  flex:1;
  min-width:0;
  height:8px;
  background:linear-gradient(#66696b,#66696b) center / 100% 2px no-repeat;
  &::-webkit-slider-thumb{
    appearance:none;
    width:8px;
    height:8px;
    border-radius:50%;
    background:#fff;
  }
`
const VColumn = styled.div`
  display:flex;
  flex:none;
  flex-direction:column;
  width:12px;
  margin-left:${p => p.$editor ? 2 : 0}px;
  padding-bottom:${p => p.$editor ? 0 : 17}px;
`
const VButton = styled.button`
  display:grid;
  flex:none;
  place-items:center;
  height:${p => p.$h}px;
  margin-top:${p => p.$top || 0}px;
  background:#3f4144;
  border:${p => p.$line ? `1px solid ${line}` : 0};
  border-radius:${p => p.$line ? 3 : 0}px;
`
const VSlider = styled.div`
  display:flex;
  flex:none;
  flex-direction:column;
  align-items:center;
  justify-content:center;
  height:${p => p.$h}px;
  margin-top:${p => p.$top}px;
  padding:3px 0;
  background:#3f4144;
  color:#fff;
`
const VRange = styled(HRange)`
  writing-mode:vertical-lr;
  direction:rtl;
  width:8px;
  min-height:0;
  margin:2px 0;
  background:linear-gradient(#66696b,#66696b) center / 2px 100% no-repeat;
`
const VScroll = styled.div`
  display:flex;
  flex:1;
  flex-direction:column;
  align-items:center;
  min-height:0;
  margin-top:${p => p.$top || 0}px;
  padding:3px 0;
  background:#3f4144;
  color:${p => p.$dim ? '#66696b' : lit};
`
const VThumb = styled.div`
  flex:none;
  width:8px;
  height:${p => p.$h}px;
  margin-top:${p => p.$top}px;
  border-radius:2px;
  background:#f2f3f4;
`

/* lower zone */
const EditorPanel = styled.section`
  display:flex;
  flex:1 1 393px;
  flex-direction:column;
  min-height:0;
  margin-top:3px;
  padding:8px 7px 6px;
  border:2px solid #505355;
  border-radius:6px 6px 6px 0;
  background:${panel};
`
const EditorBar = styled.div`
  display:flex;
  flex:none;
  justify-content:space-between;
  padding-bottom:7px;
`
const NumberField = styled.input`
  width:${p => p.$w}px;
  padding-right:5px;
  text-align:right;
  font-size:${p => p.$big ? 14 : 12}px;
  background:${dark};
  border-left:${p => p.$line ? `1px solid ${line}` : 0};
  white-space:pre;
`
const Mark = styled.span`
  width:21px;
  padding-left:5px;
  font-size:16px;
  font-weight:600;
  line-height:22px;
`
const EditorBody = styled.div`
  display:flex;
  flex:1;
  min-height:0;
`
const DrumSide = styled.div`
  display:flex;
  flex:none;
  flex-direction:column;
  width:206px;
`
const DrumTableBox = styled.div`
  flex:none;
  width:205px;
  height:182px;
  overflow:hidden;
  border-right:2px solid #808385;
  border-bottom:1px solid #6b6e70;
`
const DrumTable = styled.table`
  table-layout:fixed;
  width:202px;
  border-collapse:collapse;
  font-size:11px;
  white-space:nowrap;
  td,th{ overflow:hidden; padding:0 0 0 3px; text-align:left; border-right:1px solid #6b6e70; }
  td:last-child,th:last-child{ border-right:0; }
  th{ height:25px; padding-left:6px; font-size:12px; font-weight:400; background:${grey}; border-right:2px solid ${panel}; }
  th:first-child{ width:60px; }
  th:nth-child(2){ width:100px; }
`
const DrumRow = styled.tr`
  height:${p => p.$first ? 22 : 30}px;
  background:${p => p.$on ? '#87a5c3' : panel};
  color:${p => p.$on ? '#1a2430' : '#e0e0e0'};
  vertical-align:${p => p.$first ? 'top' : 'middle'};
`
const MapArea = styled.div`
  display:flex;
  align-items:flex-start;
  flex:1;
  min-height:0;
`
const MapBox = styled.div`
  flex:none;
  width:107px;
  height:88px;
  padding:1px 2px 0;
  border:solid #6b6e70;
  border-width:0 1px 1px 0;
  p{ height:20px; padding-left:5px; font-size:11px; line-height:19px; }
  p:nth-of-type(2){ height:24px; line-height:27px; }
`
const LaneName = styled.div`
  width:68px;
  height:30px;
  margin-left:30px;
  padding-left:3px;
  border:solid #6b6e70;
  border-width:0 1px 1px;
  font-size:9px;
  line-height:18px;
`
const SideFoot = styled.div`
  display:flex;
  gap:3px;
  width:202px;
`
const FootButtons = styled.div`
  display:flex;
  gap:1px;
  width:68px;
  button{ display:grid; place-items:center; flex:1; height:12px; background:#434548; }
`
const DrumMain = styled.div`
  position:relative;
  display:flex;
  flex-direction:column;
  flex:1;
  min-width:0;
`
const DrumUpper = styled.div`
  display:flex;
  flex:none;
  height:180px;
`
const DrumLower = styled.div`
  display:flex;
  flex:1;
  min-height:0;
`
const DrumCanvas = styled.div`
  display:flex;
  flex-direction:column;
  flex:1;
  min-width:0;
  overflow:hidden;
`
const DrumRuler = styled.div`
  display:flex;
  flex:none;
  height:25px;
  background:#1b1c1f;
`
const DrumGrid = styled.div`
  display:flex;
  flex:1;
  background:#323337;
  background-image:${p => p.$plain ? 'none' : 'linear-gradient(#4e5053 1px,transparent 1px)'};
  background-size:100% 30px;
  background-position:0 22px;
`
const BarRow = styled.div`
  display:flex;
`
const Lead = styled.div`
  display:grid;
  flex:none;
  grid-template-columns:repeat(3,1fr);
  width:58px;
`
const DrumBar = styled.div`
  display:grid;
  flex:none;
  grid-template-columns:repeat(${p => p.$n},1fr);
  width:305px;
`
const Tick = styled.b`
  height:${p => p.$bar ? 24 : 9}px;
  border-left:1px solid ${p => p.$bar ? '#f0f0f0' : p.$beat ? '#9a9c9d' : '#55585a'};
  span{ margin-left:4px; line-height:33px; color:#f0f0f0; }
`
const Beat = styled.div`
  border-left:1px solid ${p => p.$bar ? '#7b7d7f' : '#5b5d60'};
`
const SplitBar = styled.div`
  display:flex;
  flex:none;
  justify-content:center;
  height:2px;
  margin:1px 0;
  background:#808385;
  i{ width:24px; background:repeating-linear-gradient(90deg,#f0f0f0 0 4px,${panel} 4px 6px); }
`
const ZoneTabs = styled.div`
  display:flex;
  flex:none;
  height:21px;
`
const ZoneTab = styled.button`
  position:relative;
  display:flex;
  align-items:center;
  justify-content:${p => p.$on ? 'space-between' : 'flex-start'};
  width:${p => p.$w}px;
  height:${p => p.$on ? 23 : 21}px;
  margin-top:${p => p.$on ? -2 : 0}px;
  padding:2px ${p => p.$on ? 4 : 0}px 0 ${p => p.$pad || 0}px;
  font-size:${p => p.$kana ? 10 : 12}px;
  font-weight:600;
  white-space:nowrap;
  ${p => p.$on && css`
    background:${panel};
    border:solid #505355;
    border-width:0 2px 2px;
    border-radius:0 0 3px 3px;
    color:#fff;
  `}
`

/* media rack */
const Rack = styled.aside`
  display:flex;
  flex:none;
  flex-direction:column;
  width:230px;
`
const RackTabs = styled.div`
  display:flex;
  flex:none;
  height:22px;
`
const RackTab = styled.button`
  position:relative;
  width:${p => p.$on ? 82 : 69}px;
  height:${p => p.$on ? 24 : 22}px;
  padding-bottom:${p => p.$on ? 3 : 0}px;
  font-size:${p => p.$on ? 10 : 12}px;
  font-weight:600;
  ${p => p.$on && css`
    background:${panel};
    border:solid #505355;
    border-width:2px 2px 0;
    border-radius:3px 3px 0 0;
    color:#fff;
  `}
`
const RackBody = styled.div`
  display:flex;
  flex:1;
  flex-direction:column;
  min-height:0;
  padding:7px 7px 12px;
  border:2px solid #505355;
  border-radius:6px;
  background:${panel};
`
const RackRow = styled.div`
  display:flex;
  flex:none;
  gap:3px;
  height:${p => p.$h}px;
  margin-top:${p => p.$top || 0}px;
`
const SearchBox = styled.div`
  display:flex;
  align-items:center;
  flex:1;
  gap:4px;
  padding:0 3px;
  background:${dark};
  border:1px solid ${line};
  border-radius:2px;
  input{ width:100%; min-width:0; font-size:11px; font-style:italic; }
  input::placeholder{ color:#9a9c9d; opacity:1; }
`
const MediaButton = styled.button`
  display:grid;
  place-items:center;
  flex:none;
  width:25px;
  background:${p => p.$on ? lit : p.$dark ? dark : grey};
  color:${p => p.$on ? '#202123' : '#c4c5c6'};
  border:${p => p.$plain ? 0 : `1px solid ${p.$on ? lit : line}`};
  border-radius:2px;
`
const Crumbs = styled.div`
  display:flex;
  align-items:center;
  flex:none;
  gap:5px;
  height:31px;
  padding-top:3px;
  border-bottom:1px solid #808385;
  font-size:12px;
  color:#e6e6e6;
  ${MediaButton}{ width:20px; height:20px; background:#303336; }
`
const Filters = styled.div`
  display:flex;
  flex:none;
  height:108px;
  margin-top:9px;
  padding-left:2px;
`
const Filter = styled.div`
  width:${p => p.$w}px;
`
const FilterBody = styled.div`
  display:flex;
  height:87px;
  margin-top:2px;
  overflow:hidden;
  ul{ flex:1; min-width:0; overflow:hidden; padding-left:2px; }
  li{ font-size:11px; font-weight:700; line-height:19px; white-space:nowrap; color:#e8e8e8; }
`
const Bar = styled.div`
  width:6px;
  height:85px;
  margin:1px 7px 0 0;
  border-radius:3px;
  background:#505356;
  i{ display:block; height:31px; border-radius:3px; background:#f2f3f4; }
`
const FileArea = styled.div`
  display:flex;
  flex:1;
  min-height:0;
  margin-top:7px;
`
const FileBox = styled.div`
  flex:1;
  overflow:hidden;
`
const FileTable = styled.table`
  width:100%;
  border-collapse:collapse;
  font-size:11px;
  text-align:left;
  th{ height:16px; padding:0; font-weight:400; line-height:16px; background:${grey}; }
  th:first-child{ width:17px; padding-left:4px; }
  td{ padding:0 0 0 9px; }
  td:first-child{ padding:0 0 0 1px; }
  thead::after{ content:''; display:block; height:2px; }
`
const FileRow = styled.tr`
  height:19px;
  line-height:17px;
  font-weight:700;
  border-bottom:1px solid #393d40;
  background:${p => p.$on ? '#c2c3c5' : panel};
  color:${p => p.$on ? '#101112' : '#ececec'};
`
const FileScroll = styled.div`
  width:8px;
  padding-top:263px;
  border-top:16px solid ${grey};
  background:linear-gradient(#55585b,#55585b) 1px 3px / 6px 100% no-repeat;
  i{ display:block; width:6px; height:30px; margin-left:1px; border-radius:2px; background:#f2f3f4; }
`
const FileHScroll = styled.div`
  flex:none;
  height:5px;
  margin:3px 9px 0 1px;
  border-radius:3px;
  background:#55585b;
  i{ display:block; width:78px; height:5px; border-radius:3px; background:#f2f3f4; }
`
const WaveBox = styled.div`
  flex:none;
  height:75px;
  margin-top:6px;
  padding:5px 5px 0;
  border-radius:4px;
  background:#191a1d;
  font-size:11px;
  line-height:14px;
  svg{ display:block; }
  p{ padding-right:4px; text-align:right; line-height:18px; color:#c0c2c3; }
`
const WaveScale = styled.div`
  display:flex;
  justify-content:space-between;
  height:16px;
  margin-top:-14px;
  padding-left:5px;
  font-size:10px;
  color:#b0b2b3;
`
const PlayRow = styled.div`
  display:flex;
  flex:none;
  gap:3px;
  justify-content:space-between;
  height:19px;
  margin:${p => p.$top || 10}px 5px 0;
`
const MediaGroup = styled.div`
  display:flex;
  flex:none;
  ${MediaButton}{ border-radius:0; }
`
const VolumeBox = styled.div`
  display:flex;
  align-items:center;
  gap:5px;
  flex:1;
  min-width:0;
  padding:0 4px 0 3px;
  background:${dark};
  border:1px solid ${line};
  border-radius:2px;
`
const Volume = styled(HRange)`
  background:
    linear-gradient(#56a8e6,#56a8e6) 0 50% / 76% 4px no-repeat,
    linear-gradient(#34373a,#34373a) center / 100% 4px no-repeat;
`
const Pitch = styled.div`
  display:flex;
  align-items:center;
  justify-content:space-between;
  width:63px;
  padding:0 5px 0 10px;
  border:1px solid ${line};
  border-radius:2px;
  background:${dark};
  color:#606365;
  b{ color:${lit}; }
`
const Rates = styled.div`
  display:flex;
  align-items:center;
  justify-content:space-between;
  width:100px;
  padding:0 5px;
  border:1px solid ${line};
  border-radius:2px;
  background:${grey};
  font-size:11px;
  color:#808385;
  svg:last-child{ color:#c4c5c6; }
`

/* transport */
const TransportBar = styled.footer`
  display:flex;
  flex:none;
  align-items:center;
  justify-content:space-between;
  height:40px;
  padding:0 0 1px 4px;
  background:${panel};
`
const Dots = styled.i`
  flex:none;
  width:3px;
  height:11px;
  margin:0 6px 0 3px;
  background:repeating-linear-gradient(#c4c5c6 0 3px,transparent 3px 4px);
  &:last-child{ margin-right:4px; }
`
const TransportBox = styled.div`
  display:flex;
  width:276px;
  height:32px;
  border:2px solid #c6c7c8;
  border-radius:3px;
  background:#727476;
`
const TransportButton = styled.button`
  display:grid;
  place-items:center;
  flex:49;
  background:${p => p.$go ? '#39d633' : 'transparent'};
  color:${p => p.$go ? '#14420f' : '#e6e6e6'};
  &:nth-child(-n+2){ flex:38; }
`
const LevelMeter = styled.div`
  width:89px;
  height:25px;
  padding-left:1px;
  border:1px solid ${line};
  border-radius:3px;
  background:${dark};
`
